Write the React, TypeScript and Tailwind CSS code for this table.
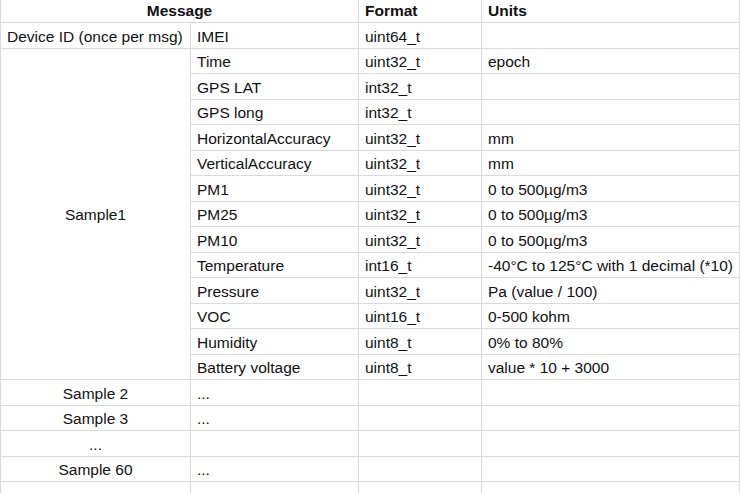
import React from 'react'

// Spreadsheet-style table: message layout for one uplink packet.
// Col widths / row heights measured off the sheet (rows are 25.5px tall).

type Row = { field: string; format: string; units: string }

const sampleRows: Row[] = [
  { field: 'Time', format: 'uint32_t', units: 'epoch' },
  { field: 'GPS LAT', format: 'int32_t', units: '' },
  { field: 'GPS long', format: 'int32_t', units: '' },
  { field: 'HorizontalAccuracy', format: 'uint32_t', units: 'mm' },
  { field: 'VerticalAccuracy', format: 'uint32_t', units: 'mm' },
  { field: 'PM1', format: 'uint32_t', units: '0 to 500µg/m3' },
  { field: 'PM25', format: 'uint32_t', units: '0 to 500µg/m3' },
  { field: 'PM10', format: 'uint32_t', units: '0 to 500µg/m3' },
  { field: 'Temperature', format: 'int16_t', units: '-40°C to 125°C with 1 decimal (*10)' },
  { field: 'Pressure', format: 'uint32_t', units: 'Pa (value / 100)' },
  { field: 'VOC', format: 'uint16_t', units: '0-500 kohm' },
  { field: 'Humidity', format: 'uint8_t', units: '0% to 80%' },
  { field: 'Battery voltage', format: 'uint8_t', units: 'value * 10 + 3000' },
]

const moreSamples = [
  { name: 'Sample 2', field: '...' },
  { name: 'Sample 3', field: '...' },
  { name: '...', field: '' },
  { name: 'Sample 60', field: '...' },
]

const cell = 'border-r border-b border-[#dadada] flex items-center px-[6px] whitespace-nowrap overflow-hidden'

function Cell({ children, className = '' }: { children?: React.ReactNode; className?: string }) {
  return <div className={`${cell} pt-[2px] ${className}`}>{children}</div>
}

function Head({ children, className = '' }: { children?: React.ReactNode; className?: string }) {
  return <div className={`${cell} font-bold ${className}`}>{children}</div>
}

export default function App() {
  return (
    <div className="h-[493px] w-[740px] overflow-hidden bg-white text-[#111] text-[15.5px] leading-none font-['Liberation_Sans',Arial,sans-serif]">
      <div className="grid grid-cols-[190px_168px_123px_258px] grid-rows-[23px_repeat(19,25.5px)] border-l border-[#dadada]">
        <Head className="col-span-2 justify-center">Message</Head>
        <Head>Format</Head>
        <Head>Units</Head>

        <Cell>Device ID (once per msg)</Cell>
        <Cell>IMEI</Cell>
        <Cell>uint64_t</Cell>
        <Cell />

        <Cell className="row-span-13 justify-center">Sample1</Cell>
        {sampleRows.map((r) => (
          <React.Fragment key={r.field}>
            <Cell>{r.field}</Cell>
            <Cell>{r.format}</Cell>
            <Cell>{r.units}</Cell>
          </React.Fragment>
        ))}

        {moreSamples.map((s) => (
          <React.Fragment key={s.name}>
            <Cell className="justify-center">{s.name}</Cell>
            <Cell>{s.field}</Cell>
            <Cell />
            <Cell />
          </React.Fragment>
        ))}

        {/* partially visible trailing row */}
        <Cell />
        <Cell />
        <Cell />
        <Cell />
      </div>
    </div>
  )
}
